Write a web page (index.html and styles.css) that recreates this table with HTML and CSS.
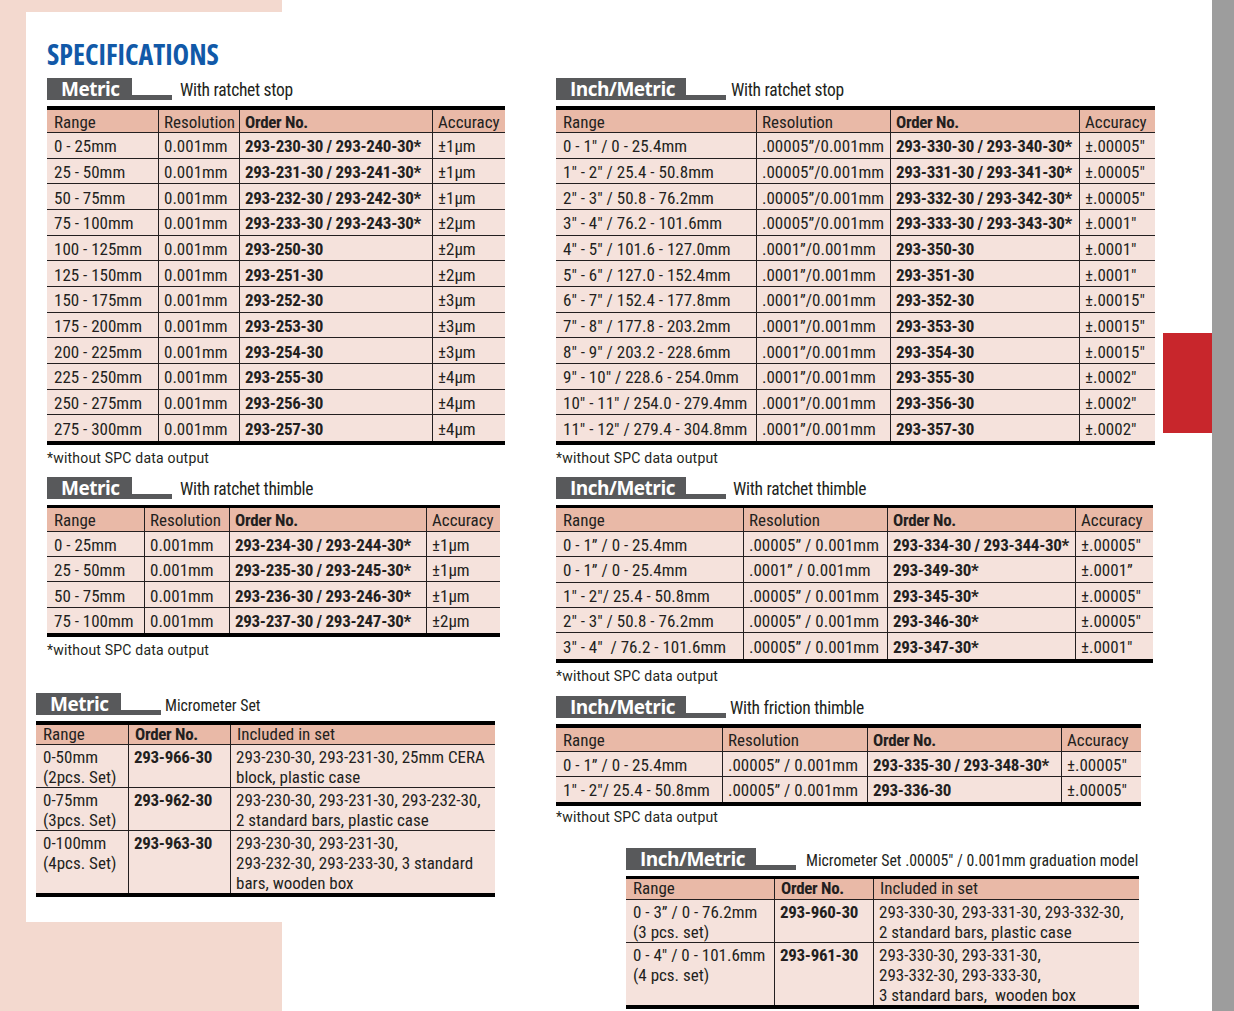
FILE: index.html
```html
<!DOCTYPE html>
<html lang="en">
<head>
<meta charset="utf-8">
<title>Specifications</title>
<link rel="stylesheet" href="styles.css">
</head>
<body>
<div class="sheet">
  <div class="col col-left">
    <h1 class="title">SPECIFICATIONS</h1>

    <div class="label mt7"><span class="tab m">Metric</span><span class="rule"></span><span class="desc g8">With ratchet stop</span></div>
    <table class="spec t1">
      <tr><th>Range</th><th>Resolution</th><th class="b">Order No.</th><th>Accuracy</th></tr>
      <tr><td>0 - 25mm</td><td>0.001mm</td><td class="b">293-230-30 / 293-240-30*</td><td>±1µm</td></tr>
      <tr><td>25 - 50mm</td><td>0.001mm</td><td class="b">293-231-30 / 293-241-30*</td><td>±1µm</td></tr>
      <tr><td>50 - 75mm</td><td>0.001mm</td><td class="b">293-232-30 / 293-242-30*</td><td>±1µm</td></tr>
      <tr><td>75 - 100mm</td><td>0.001mm</td><td class="b">293-233-30 / 293-243-30*</td><td>±2µm</td></tr>
      <tr><td>100 - 125mm</td><td>0.001mm</td><td class="b">293-250-30</td><td>±2µm</td></tr>
      <tr><td>125 - 150mm</td><td>0.001mm</td><td class="b">293-251-30</td><td>±2µm</td></tr>
      <tr><td>150 - 175mm</td><td>0.001mm</td><td class="b">293-252-30</td><td>±3µm</td></tr>
      <tr><td>175 - 200mm</td><td>0.001mm</td><td class="b">293-253-30</td><td>±3µm</td></tr>
      <tr><td>200 - 225mm</td><td>0.001mm</td><td class="b">293-254-30</td><td>±3µm</td></tr>
      <tr><td>225 - 250mm</td><td>0.001mm</td><td class="b">293-255-30</td><td>±4µm</td></tr>
      <tr><td>250 - 275mm</td><td>0.001mm</td><td class="b">293-256-30</td><td>±4µm</td></tr>
      <tr><td>275 - 300mm</td><td>0.001mm</td><td class="b">293-257-30</td><td>±4µm</td></tr>
    </table>
    <p class="note mt4">*without SPC data output</p>

    <div class="label mt10"><span class="tab m">Metric</span><span class="rule"></span><span class="desc g8">With ratchet thimble</span></div>
    <table class="spec t2">
      <tr><th>Range</th><th>Resolution</th><th class="b">Order No.</th><th>Accuracy</th></tr>
      <tr><td>0 - 25mm</td><td>0.001mm</td><td class="b">293-234-30 / 293-244-30*</td><td>±1µm</td></tr>
      <tr><td>25 - 50mm</td><td>0.001mm</td><td class="b">293-235-30 / 293-245-30*</td><td>±1µm</td></tr>
      <tr><td>50 - 75mm</td><td>0.001mm</td><td class="b">293-236-30 / 293-246-30*</td><td>±1µm</td></tr>
      <tr><td>75 - 100mm</td><td>0.001mm</td><td class="b">293-237-30 / 293-247-30*</td><td>±2µm</td></tr>
    </table>
    <p class="note mt4">*without SPC data output</p>

    <div class="shift">
      <div class="label mt34"><span class="tab m">Metric</span><span class="rule"></span><span class="desc small g4">Micrometer Set</span></div>
      <table class="spec multi t3">
        <tr><th>Range</th><th class="b">Order No.</th><th>Included in set</th></tr>
        <tr><td>0-50mm<br>(2pcs. Set)</td><td class="b">293-966-30</td><td>293-230-30, 293-231-30, 25mm CERA<br>block, plastic case</td></tr>
        <tr><td>0-75mm<br>(3pcs. Set)</td><td class="b">293-962-30</td><td>293-230-30, 293-231-30, 293-232-30,<br>2 standard bars, plastic case</td></tr>
        <tr><td>0-100mm<br>(4pcs. Set)</td><td class="b">293-963-30</td><td>293-230-30, 293-231-30,<br>293-232-30, 293-233-30, 3 standard<br>bars, wooden box</td></tr>
      </table>
    </div>
  </div>

  <div class="col col-right">
    <div class="label"><span class="tab im">Inch/Metric</span><span class="rule"></span><span class="desc g5">With ratchet stop</span></div>
    <table class="spec t4">
      <tr><th>Range</th><th>Resolution</th><th class="b">Order No.</th><th>Accuracy</th></tr>
      <tr><td>0 - 1" / 0 - 25.4mm</td><td>.00005”/0.001mm</td><td class="b">293-330-30 / 293-340-30*</td><td>±.00005"</td></tr>
      <tr><td>1" - 2" / 25.4 - 50.8mm</td><td>.00005”/0.001mm</td><td class="b">293-331-30 / 293-341-30*</td><td>±.00005"</td></tr>
      <tr><td>2" - 3" / 50.8 - 76.2mm</td><td>.00005”/0.001mm</td><td class="b">293-332-30 / 293-342-30*</td><td>±.00005"</td></tr>
      <tr><td>3" - 4" / 76.2 - 101.6mm</td><td>.00005”/0.001mm</td><td class="b">293-333-30 / 293-343-30*</td><td>±.0001"</td></tr>
      <tr><td>4" - 5" / 101.6 - 127.0mm</td><td>.0001”/0.001mm</td><td class="b">293-350-30</td><td>±.0001"</td></tr>
      <tr><td>5" - 6" / 127.0 - 152.4mm</td><td>.0001”/0.001mm</td><td class="b">293-351-30</td><td>±.0001"</td></tr>
      <tr><td>6" - 7" / 152.4 - 177.8mm</td><td>.0001”/0.001mm</td><td class="b">293-352-30</td><td>±.00015"</td></tr>
      <tr><td>7" - 8" / 177.8 - 203.2mm</td><td>.0001”/0.001mm</td><td class="b">293-353-30</td><td>±.00015"</td></tr>
      <tr><td>8" - 9" / 203.2 - 228.6mm</td><td>.0001”/0.001mm</td><td class="b">293-354-30</td><td>±.00015"</td></tr>
      <tr><td>9" - 10" / 228.6 - 254.0mm</td><td>.0001”/0.001mm</td><td class="b">293-355-30</td><td>±.0002"</td></tr>
      <tr><td>10" - 11" / 254.0 - 279.4mm</td><td>.0001”/0.001mm</td><td class="b">293-356-30</td><td>±.0002"</td></tr>
      <tr><td>11" - 12" / 279.4 - 304.8mm</td><td>.0001”/0.001mm</td><td class="b">293-357-30</td><td>±.0002"</td></tr>
    </table>
    <p class="note mt4">*without SPC data output</p>

    <div class="label mt10"><span class="tab im">Inch/Metric</span><span class="rule"></span><span class="desc g7">With ratchet thimble</span></div>
    <table class="spec t5">
      <tr><th>Range</th><th>Resolution</th><th class="b">Order No.</th><th>Accuracy</th></tr>
      <tr><td>0 - 1” / 0 - 25.4mm</td><td>.00005” / 0.001mm</td><td class="b">293-334-30 / 293-344-30*</td><td>±.00005"</td></tr>
      <tr><td>0 - 1” / 0 - 25.4mm</td><td>.0001” / 0.001mm</td><td class="b">293-349-30*</td><td>±.0001”</td></tr>
      <tr><td>1" - 2"/ 25.4 - 50.8mm</td><td>.00005” / 0.001mm</td><td class="b">293-345-30*</td><td>±.00005"</td></tr>
      <tr><td>2" - 3" / 50.8 - 76.2mm</td><td>.00005” / 0.001mm</td><td class="b">293-346-30*</td><td>±.00005"</td></tr>
      <tr><td>3" - 4" &nbsp;/ 76.2 - 101.6mm</td><td>.00005” / 0.001mm</td><td class="b">293-347-30*</td><td>±.0001"</td></tr>
    </table>
    <p class="note mt4">*without SPC data output</p>

    <div class="label mt11"><span class="tab im">Inch/Metric</span><span class="rule"></span><span class="desc g4">With friction thimble</span></div>
    <table class="spec t6">
      <tr><th>Range</th><th>Resolution</th><th class="b">Order No.</th><th>Accuracy</th></tr>
      <tr><td>0 - 1” / 0 - 25.4mm</td><td>.00005” / 0.001mm</td><td class="b">293-335-30 / 293-348-30*</td><td>±.00005"</td></tr>
      <tr><td>1" - 2"/ 25.4 - 50.8mm</td><td>.00005” / 0.001mm</td><td class="b">293-336-30</td><td>±.00005"</td></tr>
    </table>
    <p class="note mt2">*without SPC data output</p>

    <div class="indent">
      <div class="label mt22"><span class="tab im">Inch/Metric</span><span class="rule"></span><span class="desc small g10">Micrometer Set .00005" / 0.001mm graduation model</span></div>
      <table class="spec multi t7">
        <tr><th>Range</th><th class="b">Order No.</th><th>Included in set</th></tr>
        <tr><td>0 - 3” / 0 - 76.2mm<br>(3 pcs. set)</td><td class="b">293-960-30</td><td>293-330-30, 293-331-30, 293-332-30,<br>2 standard bars, plastic case</td></tr>
        <tr><td>0 - 4" / 0 - 101.6mm<br>(4 pcs. set)</td><td class="b">293-961-30</td><td>293-330-30, 293-331-30,<br>293-332-30, 293-333-30,<br>3 standard bars, &nbsp;wooden box</td></tr>
      </table>
    </div>
  </div>

  <div class="index-tab"></div>
</div>
<div class="edge"></div>
</body>
</html>
```
FILE: styles.css
```css
* { box-sizing: border-box; }

html, body { margin: 0; padding: 0; }

body {
  width: 1234px;
  height: 1011px;
  overflow: hidden;
  display: flex;
  align-items: stretch;
  background: linear-gradient(to right, #f3d9cf 282px, #ffffff 282px);
  font-family: "Roboto Condensed", "Open Sans", sans-serif;
  color: #231f20;
}

/* white page */
.sheet {
  position: relative;
  width: 1186px;
  margin: 12px 0 0 26px;
  display: grid;
  grid-template-columns: 504px 1fr;
  align-items: start;
  background: linear-gradient(to bottom, #ffffff 910px, transparent 910px);
}

.edge {
  width: 22px;
  background: #9d9d9d;
}

.index-tab {
  position: absolute;
  top: 321px;
  right: 0;
  width: 49px;
  height: 100px;
  background: #c8262c;
}

.col-left { padding: 25px 0 0 21px; }
.col-right { padding: 66px 0 0 26px; }

.shift { margin-left: -11px; }
.indent { margin-left: 70px; }

.title {
  margin: 0;
  font-family: "Open Sans", sans-serif;
  font-size: 28px;
  line-height: 34px;
  font-weight: 700;
  font-stretch: 75%;
  color: #1159a8;
}

/* section labels */
.label {
  display: flex;
  align-items: baseline;
  height: 22px;
}
.tab {
  display: block;
  height: 22px;
  line-height: 22px;
  padding-left: 14px;
  background: #58595b;
  color: #ffffff;
  font-family: "Open Sans", sans-serif;
  font-size: 19px;
  font-weight: 700;
  letter-spacing: -0.5px;
  white-space: nowrap;
}
.tab.m { width: 85px; }
.tab.im { width: 130px; }
.rule {
  align-self: flex-end;
  width: 40px;
  height: 5px;
  background: #58595b;
}
.desc {
  font-size: 17.5px;
  line-height: 22px;
  letter-spacing: -0.3px;
  white-space: nowrap;
}
.desc.small { font-size: 15.8px; letter-spacing: 0; }
.g4 { margin-left: 4px; }
.g5 { margin-left: 5px; }
.g7 { margin-left: 7px; }
.g8 { margin-left: 8px; }
.g10 { margin-left: 10px; }

.mt2 { margin-top: 2px; }
.mt4 { margin-top: 4px; }
.mt7 { margin-top: 7px; }
.mt10 { margin-top: 10px; }
.mt11 { margin-top: 11px; }
.mt22 { margin-top: 22px; }
.mt34 { margin-top: 34px; }

.note {
  margin-bottom: 0;
  font-family: Roboto, "Open Sans", sans-serif;
  font-size: 14px;
  line-height: 18px;
  letter-spacing: 0.2px;
  white-space: nowrap;
}

/* tables */
.spec {
  margin-top: 6px;
  border-collapse: separate;
  border-spacing: 0;
  table-layout: fixed;
  border-top: 4px solid #000000;
  border-bottom: 4px solid #000000;
  font-size: 17px;
  line-height: 20px;
}
.spec th,
.spec td {
  padding: 2px 5px 0;
  border-bottom: 1px solid #231f20;
  border-left: 1px solid #231f20;
  text-align: left;
  vertical-align: middle;
  font-weight: 400;
  white-space: nowrap;
  background: #f5e2dc;
}
.spec th { background: #e9b9a7; }
.spec th:first-child,
.spec td:first-child {
  border-left: 0;
  padding-left: 7px;
}
.spec tr:last-child td { border-bottom: 0; }
.spec .b { font-weight: 700; letter-spacing: -0.3px; }

.multi th {
  padding: 0 6px;
  line-height: 19px;
}
.multi td {
  vertical-align: top;
  padding-top: 2px;
  padding-bottom: 0;
}

/* table 1: metric ratchet stop */
.t1 { width: 458px; }
.t1 th { height: 23px; }
.t1 td { height: 25.67px; }
.t1 th:nth-child(1) { width: 111px; }
.t1 th:nth-child(2) { width: 81px; }
.t1 th:nth-child(3) { width: 193px; }
.t1 th:nth-child(4) { width: 73px; }

/* table 2: metric ratchet thimble */
.t2 { width: 453px; border-top-width: 3px; }
.t2 th { height: 24px; }
.t2 td { height: 25.25px; }
.t2 th:nth-child(1) { width: 97px; }
.t2 th:nth-child(2) { width: 85px; }
.t2 th:nth-child(3) { width: 197px; }
.t2 th:nth-child(4) { width: 74px; }

/* table 3: metric set */
.t3 { width: 459px; }
.t3 th { height: 20px; }
.t3 th:nth-child(1) { width: 92px; }
.t3 th:nth-child(2) { width: 102px; }
.t3 th:nth-child(3) { width: 265px; }

/* table 4: inch ratchet stop */
.t4 { width: 599px; }
.t4 th { height: 23px; }
.t4 td { height: 25.67px; }
.t4 th:nth-child(1) { width: 200px; }
.t4 th:nth-child(2) { width: 134px; }
.t4 th:nth-child(3) { width: 189px; }
.t4 th:nth-child(4) { width: 76px; }

/* table 5: inch ratchet thimble */
.t5 { width: 597px; border-top-width: 3px; }
.t5 th { height: 24px; }
.t5 td { height: 25.4px; }
.t5 th:nth-child(1) { width: 187px; }
.t5 th:nth-child(2) { width: 144px; }
.t5 th:nth-child(3) { width: 188px; }
.t5 th:nth-child(4) { width: 78px; }

/* table 6: inch friction thimble */
.t6 { width: 585px; }
.t6 th { height: 24px; }
.t6 td { height: 25px; }
.t6 th:nth-child(1) { width: 166px; }
.t6 th:nth-child(2) { width: 145px; }
.t6 th:nth-child(3) { width: 194px; }
.t6 th:nth-child(4) { width: 80px; }

/* table 7: inch set */
.t7 { width: 513px; border-top-width: 3px; }
.t7 th { height: 21px; }
.t7 th:nth-child(1) { width: 148px; }
.t7 th:nth-child(2) { width: 99px; }
.t7 th:nth-child(3) { width: 266px; }
```
